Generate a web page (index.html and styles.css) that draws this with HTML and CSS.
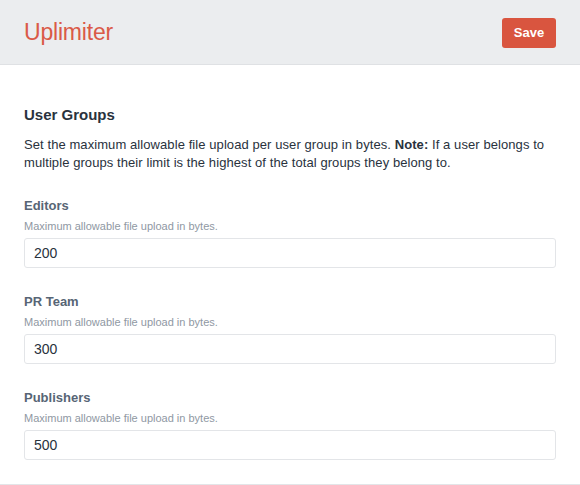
FILE: index.html
```html
<!DOCTYPE html>
<html>
<head>
<meta charset="utf-8">
<link rel="stylesheet" href="styles.css">
</head>
<body>
<div class="page">
  <header class="header">
    <h1 class="title">Uplimiter</h1>
    <button class="btn-save">Save</button>
  </header>
  <main class="content">
    <h2 class="section-title">User Groups</h2>
    <p class="intro">Set the maximum allowable file upload per user group in bytes. <strong>Note:</strong> If a user belongs to multiple groups their limit is the highest of the total groups they belong to.</p>
    <div class="field">
      <div class="label">Editors</div>
      <div class="instructions">Maximum allowable file upload in bytes.</div>
      <input class="text" type="text" value="200">
    </div>
    <div class="field">
      <div class="label">PR Team</div>
      <div class="instructions">Maximum allowable file upload in bytes.</div>
      <input class="text" type="text" value="300">
    </div>
    <div class="field">
      <div class="label">Publishers</div>
      <div class="instructions">Maximum allowable file upload in bytes.</div>
      <input class="text" type="text" value="500">
    </div>
  </main>
</div>
</body>
</html>
```
FILE: styles.css
```css
html, body {
  margin: 0;
  padding: 0;
  background: #fff;
}
body {
  font-family: "Liberation Sans", Arial, sans-serif;
  color: #29323d;
  font-size: 13px;
}
.page {
  height: 485px;
  display: flex;
  flex-direction: column;
  box-sizing: border-box;
  border-bottom: 1px solid #e3e5e8;
}
.header {
  height: 64px;
  flex: none;
  background: #ebedef;
  border-bottom: 1px solid #dfe1e4;
  display: flex;
  align-items: center;
  justify-content: space-between;
  padding: 0 24px;
}
.title {
  margin: 0;
  font-size: 23px;
  font-weight: normal;
  color: #da5a47;
  letter-spacing: -0.2px;
}
.btn-save {
  width: 54px;
  height: 30px;
  margin-top: 1px;
  border: none;
  border-radius: 3px;
  background: #d9553f;
  color: #fff;
  font-family: "Liberation Sans", Arial, sans-serif;
  font-weight: bold;
  font-size: 13px;
  padding: 0;
}
.content {
  padding: 40px 24px 0;
}
.section-title {
  margin: 0 0 11px;
  font-size: 15px;
  line-height: 20px;
  font-weight: bold;
  color: #29323d;
}
.intro {
  margin: 0 0 25px;
  font-size: 13px;
  line-height: 18px;
  letter-spacing: 0.08px;
  color: #29323d;
}
.intro strong {
  font-weight: bold;
}
.field {
  margin-bottom: 25px;
}
.label {
  font-size: 13px;
  line-height: 18px;
  font-weight: bold;
  color: #576575;
}
.instructions {
  font-size: 11px;
  line-height: 15px;
  color: #8f98a3;
  margin: 4px 0 4px;
}
.text {
  display: block;
  box-sizing: border-box;
  width: 100%;
  height: 30px;
  margin: 0;
  border: 1px solid #e3e5e8;
  border-radius: 3px;
  padding: 0 9px;
  font-family: "Liberation Sans", Arial, sans-serif;
  font-size: 14px;
  color: #29323d;
  outline: none;
}
```
